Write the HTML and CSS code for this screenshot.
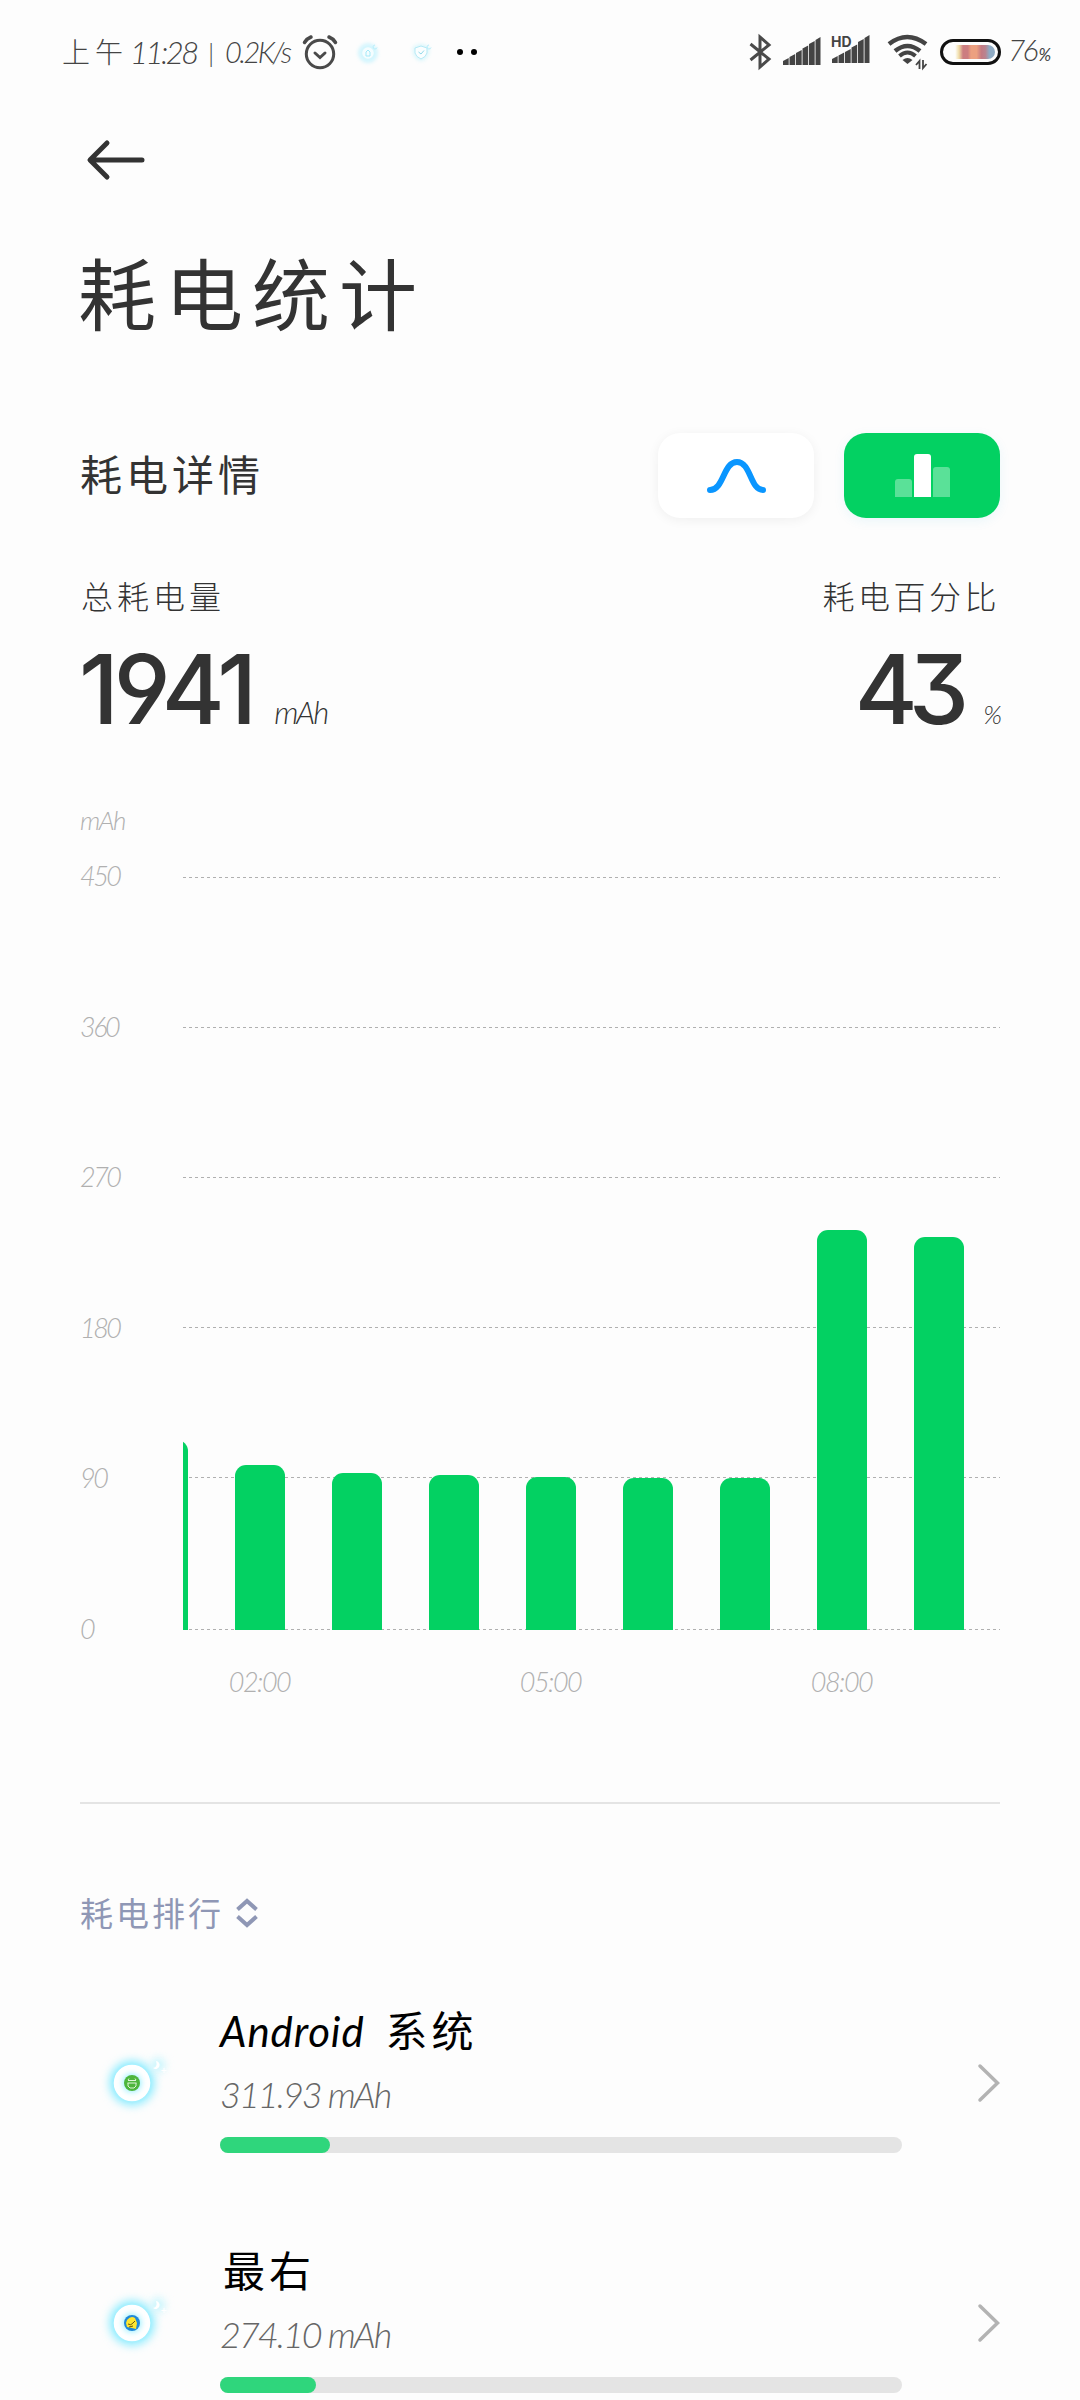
FILE: index.html
```
<!DOCTYPE html>
<html lang="zh-CN">
<head>
    <meta charset="UTF-8">
    <title>耗电统计</title>
    <link rel="stylesheet" href="styles.css">
</head>
<body>
    <div class="status-bar">
        <span class="status-ampm">上午</span>
        <span class="status-time">11:28</span>
        <span class="status-sep">|</span>
        <span class="status-speed">0.2K/s</span>
        <svg class="icon-alarm" width="36" height="36" viewBox="0 0 36 36" fill="none" stroke="#4a4a4a" stroke-linecap="round">
            <circle cx="18" cy="20" r="13.7" stroke-width="3"/>
            <path d="M13 19l5 4.500 5-4.500" stroke-width="3"/>
            <path d="M2.500 8.500Q5 4.500 9 3M33.500 8.500Q31 4.500 27 3" stroke-width="3.500"/>
        </svg>
        <svg class="icon-notice" width="30" height="30" viewBox="0 0 30 30" fill="none">
            <circle class="soft-glow" cx="14" cy="16" r="7.500" stroke="#a8eeff" stroke-width="2.500"/>
            <circle cx="14" cy="16" r="6.500" fill="#f4fdff" stroke="#d5f6fd" stroke-width="1.500"/>
            <path d="M12 19v-4l2-2 2 2v4z" stroke="#a5e9f8"/>
            <path d="M21 8a2 2 0 1 0 2 2.500" stroke="#b8effb"/>
        </svg>
        <svg class="icon-notice-2" width="30" height="30" viewBox="0 0 30 30" fill="none">
            <path class="soft-glow" d="M13 9l6 2v5q-1 4-6 6-5-2-6-6v-5z" stroke="#b4f0fc" stroke-width="2"/>
            <path d="M13 9l6 2v5q-1 4-6 6-5-2-6-6v-5z" fill="#fafeff" stroke="#b6e9f5"/>
            <path d="M10.500 15l2.500 2 3-3.500" stroke="#90d9ea"/>
            <path d="M21 8a2 2 0 1 0 2 2.500" stroke="#b8effb"/>
        </svg>
        <span class="dot"></span>
        <span class="dot"></span>
        <div class="status-right">
            <svg width="22" height="36" viewBox="0 0 22 36" fill="none" stroke="#4a4a4a" stroke-width="3">
                <path d="M1.500 10L20 25 11 33V3l9 8L1.500 26"/>
            </svg>
            <svg class="icon-signal" width="38" height="36" viewBox="0 0 38 36" fill="#444">
                <path d="M0 27l5.700-3v7H0zM6.500 23l5.700-3v11h-5.700zM13 19l5.700-3v15h-5.700zM19.500 14.500l5.700-3V31h-5.700zM26 10l5.700-3v24h-5.700zM32.500 6l5-3v28h-5z"/>
            </svg>
            <svg class="icon-signal-hd" width="38" height="36" viewBox="0 0 38 36" fill="#444">
                <path d="M0 25l5.700-3v7H0zM6.500 21.500l5.700-3V29h-5.700zM13 18l5.700-3v14h-5.700zM19.500 13.500l5.700-3V29h-5.700zM26 8l5.700-3v24h-5.700zM32.500 4l5-3v28h-5z"/>
                <text class="hd-text" x="-1" y="12.500">HD</text>
            </svg>
            <svg class="icon-wifi" width="42" height="36" viewBox="0 0 42 36" fill="none" stroke="#444">
                <path d="M2 10Q20 -4 39 10M8 17Q20.500 7 33 17" stroke-width="4.500"/>
                <path d="M12.500 22Q20.500 15 28.500 22" stroke-width="4"/>
                <path d="M15.500 26q5-4 10 0l-5 4z" fill="#444" stroke="none"/>
                <path d="M32.500 35v-8l-3.500 4M36 26v8l3.500-4" stroke-width="1.800"/>
            </svg>
            <span class="battery"><span class="battery-level"></span></span>
            <span class="status-percent">76<small>%</small></span>
        </div>
    </div>

    <div class="page">
        <div class="nav">
            <svg width="60" height="40" viewBox="0 0 60 40" fill="none" stroke="#333" stroke-width="5" stroke-linecap="round" stroke-linejoin="round">
                <path d="M56 20H5M21 3L4 20l17 17"/>
            </svg>
        </div>
        <h1 class="title">耗电统计</h1>

        <div class="detail-header">
            <h2 class="detail-title">耗电详情</h2>
            <div class="tabs">
                <div class="tab">
                    <svg width="60" height="36" viewBox="0 0 60 36" fill="none" stroke="#0a96ff" stroke-width="6" stroke-linecap="round">
                        <path d="M4 32C18 32 17 4 31 4S44 32 57 32"/>
                    </svg>
                </div>
                <div class="tab active">
                    <span class="mini-bar low"></span>
                    <span class="mini-bar high"></span>
                    <span class="mini-bar mid"></span>
                </div>
            </div>
        </div>

        <div class="summary">
            <div>
                <div class="summary-label">总耗电量</div>
                <div class="summary-value"><span class="number">1941</span><span class="unit">mAh</span></div>
            </div>
            <div class="summary-right">
                <div class="summary-label">耗电百分比</div>
                <div class="summary-value"><span class="number tight">43</span><span class="unit percent">%</span></div>
            </div>
        </div>

        <div class="chart">
            <div class="axis-unit">mAh</div>
            <div class="chart-body">
                <div class="y-axis">
                    <span>450</span>
                    <span>360</span>
                    <span>270</span>
                    <span>180</span>
                    <span>90</span>
                    <span>0</span>
                </div>
                <div class="plot">
                    <div class="grid-lines">
                        <i></i><i></i><i></i><i></i><i></i><i></i>
                    </div>
                    <div class="bars" id="bars"></div>
                </div>
            </div>
            <div class="x-axis">
                <span>02:00</span>
                <span>05:00</span>
                <span>08:00</span>
            </div>
        </div>

        <div class="rank-header">
            <span>耗电排行</span>
            <svg width="22" height="30" viewBox="0 0 22 30" fill="none" stroke="#8f97b5" stroke-width="4">
                <path d="M1.500 11.500L11 3l9.500 8.500M1.500 18.500L11 27l9.500-8.500"/>
            </svg>
        </div>

        <div class="item">
            <div class="app-icon">
                <svg width="80" height="80" viewBox="0 0 80 80" fill="none">
                    <circle class="glow" cx="40" cy="40" r="22"/>
                    <circle class="glow-small" cx="66" cy="22" r="7"/>
                    <circle cx="40" cy="40" r="18.300" fill="#fff"/>
                    <path d="M64 18a4 4 0 1 1-3 7q5-1 3-7z" fill="#fff"/>
                    <path d="M72 25v5M69.500 27.500h5" stroke="#fff"/>
                    <circle class="glow-inner" cx="40" cy="40" r="9"/>
                    <circle cx="40" cy="40" r="8" fill="#4db53c"/>
                    <path d="M36 37.500h8M35.500 40h9M36 37l1-1.500M44 37l-1-1.500M36 40v3l2 2h4l2-2v-3" stroke="#dff5d8"/>
                </svg>
            </div>
            <div class="item-info">
                <div class="item-name"><em>Android</em>系统</div>
                <div class="item-value">311.93 mAh</div>
                <div class="progress"><div class="progress-fill" style="width: 110px"></div></div>
            </div>
            <svg class="chevron" width="22" height="38" viewBox="0 0 22 38">
                <path d="M2 2l17.500 17L2 36"/>
            </svg>
        </div>

        <div class="item">
            <div class="app-icon">
                <svg width="80" height="80" viewBox="0 0 80 80" fill="none">
                    <circle class="glow" cx="40" cy="40" r="22"/>
                    <circle class="glow-small" cx="66" cy="22" r="7"/>
                    <circle cx="40" cy="40" r="18.300" fill="#fff"/>
                    <path d="M64 18a4 4 0 1 1-3 7q5-1 3-7z" fill="#fff"/>
                    <path d="M72 25v5M69.500 27.500h5" stroke="#fff"/>
                    <circle class="glow-inner" cx="40" cy="40" r="9"/>
                    <circle cx="40" cy="40" r="8" fill="#2088d8"/>
                    <path d="M35 37q4-5 8-2l2 5-1 6-4-1-5-1-1-4z" fill="#ffe62e"/>
                    <path d="M36 41q3 2 5-1l2-2M37 44l4-1" stroke="#6b5a10"/>
                </svg>
            </div>
            <div class="item-info">
                <div class="item-name zuiyou">最右</div>
                <div class="item-value">274.10 mAh</div>
                <div class="progress"><div class="progress-fill" style="width: 96px"></div></div>
            </div>
            <svg class="chevron" width="22" height="38" viewBox="0 0 22 38">
                <path d="M2 2l17.500 17L2 36"/>
            </svg>
        </div>
    </div>

    <script>
        // bar heights in px, one per hour starting at 01:00
        const heights = [190, 165, 157, 155.5, 153.5, 152, 152, 400, 393];

        document.getElementById('bars').innerHTML = heights
            .map(h => `<div class="bar" style="height: ${h}px"></div>`)
            .join('');
    </script>
</body>
</html>
```
FILE: styles.css
```
* {
    box-sizing: border-box;
}

body {
    margin: 0;
    width: 1080px;
    height: 2400px;
    overflow: hidden;
    background: #fdfdfd;
    color: #333;
    font-family: Lato, "Noto Sans CJK SC", sans-serif;
    font-weight: 300;
}

svg {
    display: block;
    flex: none;
    overflow: visible;
}

/* status bar */
.status-bar {
    display: flex;
    align-items: center;
    height: 104px;
    padding: 0 30px 0 62px;
    color: #444;
    line-height: 40px;
    white-space: nowrap;
}

.status-ampm {
    width: 68px;
    font-size: 28px;
    letter-spacing: 5px;
}

.status-time {
    width: 78px;
    font-size: 31px;
    font-style: italic;
    letter-spacing: -2.500px;
}

.status-sep {
    width: 17px;
    font-size: 26px;
}

.status-speed {
    width: 77px;
    font-size: 29px;
    font-style: italic;
    letter-spacing: -2.500px;
}

.icon-notice {
    margin-left: 16px;
}

.icon-notice-2 {
    margin: 0 19px 0 24px;
}

.soft-glow {
    filter: blur(2px);
}

.dot {
    width: 6px;
    height: 6px;
    margin-right: 8px;
    border-radius: 50%;
    background: #000;
}

.status-right {
    display: flex;
    align-items: center;
    margin-left: auto;
    width: 301px;
}

.icon-signal {
    margin-left: 12px;
}

.icon-signal-hd {
    margin-left: 11px;
}

.icon-wifi {
    margin-left: 17px;
}

.hd-text {
    font: 700 14px Inter, sans-serif;
    stroke: #fdfdfd;
    stroke-width: 2px;
    paint-order: stroke;
}

.battery {
    display: flex;
    width: 61px;
    height: 26px;
    margin-left: 11px;
    padding: 3px;
    border: 3px solid #111;
    border-radius: 13px;
}

.battery-level {
    width: 40px;
    margin-left: 9px;
    border-radius: 0 7px 7px 0;
    background: linear-gradient(90deg, #fff, #efdca6 10%, #cc7d80 20%, #cc7d80 32%, #eca080 40%, #eca080 54%, #c47a83 66%, #b98490 76%, #8fabc4 86%);
}

.status-percent {
    margin-left: 7px;
    font-size: 30px;
    font-style: italic;
    letter-spacing: -3px;
}

.status-percent small {
    margin-left: 3px;
    font-size: 17px;
    font-weight: 400;
}

/* page */
.page {
    padding: 0 80px;
}

.nav {
    display: flex;
    align-items: center;
    height: 112px;
    padding-left: 6px;
}

.title {
    height: 100px;
    margin: 28px 0 0 -2px;
    font-size: 78px;
    font-weight: 400;
    line-height: 102px;
    letter-spacing: 9px;
}

.detail-header {
    display: flex;
    align-items: center;
    justify-content: space-between;
    height: 85px;
    margin-top: 89px;
}

.detail-title {
    margin: -6px 0 0;
    font-size: 42px;
    font-weight: 400;
    letter-spacing: 4px;
}

.tabs {
    display: flex;
    gap: 30px;
}

.tab {
    display: flex;
    align-items: center;
    justify-content: center;
    width: 156px;
    height: 85px;
    border-radius: 22px;
    background: #fff;
    box-shadow: 0 2px 12px rgba(0, 0, 0, 0.06);
}

.tab.active {
    align-items: flex-end;
    gap: 2px;
    padding-bottom: 21px;
    background: #03d162;
    box-shadow: 0 3px 12px rgba(0, 160, 220, 0.08);
}

.mini-bar {
    width: 17px;
    border-radius: 3px 3px 0 0;
    background: rgba(255, 255, 255, 0.35);
}

.mini-bar.low {
    height: 18px;
}

.mini-bar.high {
    height: 43px;
    background: #fff;
}

.mini-bar.mid {
    height: 30px;
}

.summary {
    display: flex;
    justify-content: space-between;
    height: 160px;
    margin-top: 57px;
}

.summary-right {
    text-align: right;
}

.summary-label {
    padding-left: 1px;
    font-size: 32px;
    line-height: 44px;
    letter-spacing: 4px;
}

.summary-right .summary-label {
    letter-spacing: 3.500px;
}

.summary-value {
    display: flex;
    align-items: baseline;
    height: 112px;
    padding-top: 14px;
    line-height: 112px;
}

.summary-right .summary-value {
    justify-content: flex-end;
}

.number {
    margin-left: -1px;
    font-family: Inter, sans-serif;
    font-size: 96px;
    font-weight: 500;
    letter-spacing: -5px;
    font-feature-settings: "cv04", "cv09";
}

.number.tight {
    letter-spacing: -9px;
}

.unit {
    margin-left: 22px;
    font-size: 31px;
    font-style: italic;
    letter-spacing: -2px;
}

.unit.percent {
    margin-left: 23px;
    font-size: 26px;
}

/* chart */
.chart {
    height: 1004px;
    margin-top: 69px;
    border-bottom: 2px solid #e4e4e4;
    color: #b0b0b0;
    font-size: 27px;
    font-style: italic;
}

.axis-unit {
    height: 57px;
    margin-top: -4px;
    font-size: 26px;
    line-height: 40px;
    letter-spacing: -1.500px;
}

.chart-body {
    display: flex;
    height: 753px;
    margin-top: 20px;
}

.y-axis {
    display: flex;
    flex-direction: column;
    justify-content: space-between;
    width: 103px;
    height: 793px;
    margin-top: -21px;
    line-height: 40px;
    letter-spacing: -2.500px;
}

.plot {
    display: grid;
    width: 818px;
    overflow: hidden;
}

.grid-lines,
.bars {
    grid-area: 1 / 1;
}

.grid-lines i {
    display: block;
    height: 1px;
    margin-bottom: 149px;
    background: repeating-linear-gradient(90deg, #b0b0b0 0 3px, transparent 3px 6px);
}

.grid-lines i:nth-child(5) {
    margin-bottom: 151px;
}

.grid-lines i:last-child {
    margin-bottom: 0;
}

.bars {
    display: flex;
    align-items: flex-end;
    gap: 47px;
    margin-left: -45px;
}

.bar {
    flex: none;
    width: 50px;
    border-radius: 11px 11px 0 0;
    background: #03d162;
}

/* one label every three bars */
.x-axis {
    display: flex;
    margin: 32px 0 0 34px;
    line-height: 40px;
    letter-spacing: -1.500px;
}

.x-axis span {
    width: 291px;
    flex: none;
    text-align: center;
}

/* ranking */
.rank-header {
    display: flex;
    align-items: center;
    gap: 12px;
    height: 60px;
    margin-top: 79px;
    color: #8f97b5;
    font-size: 33px;
    font-weight: 400;
    line-height: 60px;
    letter-spacing: 3px;
}

.rank-header + .item {
    margin-top: 20px;
}

.item {
    display: flex;
    align-items: center;
    height: 240px;
}

.app-icon {
    width: 140px;
    padding-left: 12px;
}

.glow {
    fill: #7eeaff;
    filter: blur(5px);
}

.glow-small {
    fill: #c4f5fd;
    filter: blur(4px);
}

.glow-inner {
    fill: #8eeeff;
    filter: blur(3px);
}

.item-info {
    width: 682px;
    margin-top: -13px;
}

.item-name {
    height: 64px;
    color: #000;
    font-size: 42px;
    font-weight: 400;
    line-height: 62px;
    letter-spacing: 4px;
}

.item-name em {
    margin-right: 21px;
    letter-spacing: 0.900px;
}

.item-name.zuiyou {
    padding-left: 3px;
}

.item-value {
    height: 60px;
    color: #666;
    font-size: 36px;
    font-style: italic;
    line-height: 60px;
    letter-spacing: -2px;
}

.progress {
    height: 16px;
    margin-top: 13px;
    border-radius: 8px;
    background: #e4e4e4;
}

.progress-fill {
    height: 16px;
    border-radius: 8px;
    background: #2fd67c;
}

.chevron {
    margin-left: 76px;
    fill: none;
    stroke: #b3b3b3;
    stroke-width: 3.500;
    stroke-linecap: round;
}
```
